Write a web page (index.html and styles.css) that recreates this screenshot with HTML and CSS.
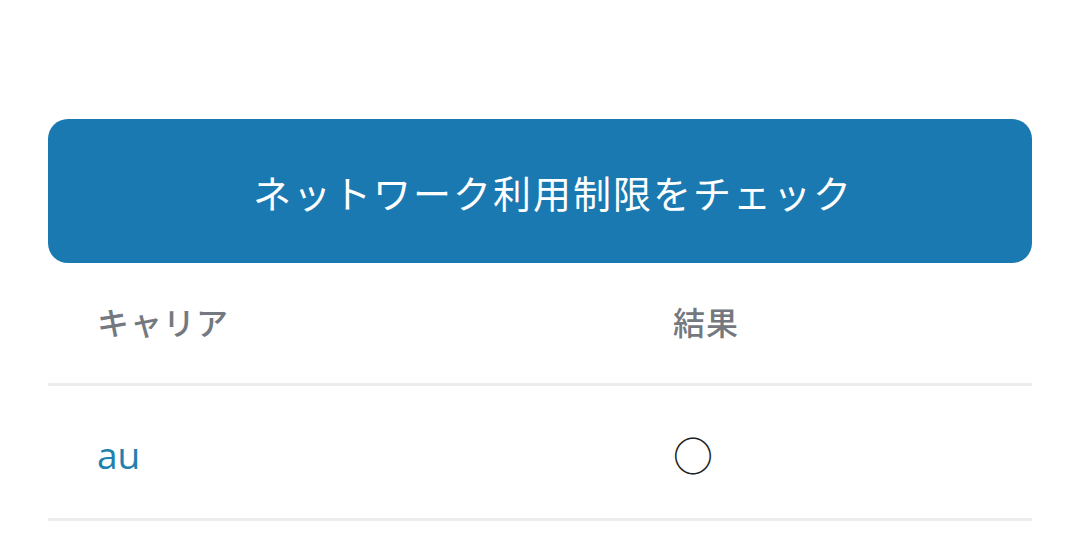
FILE: index.html
```html
<!DOCTYPE html>
<html lang="ja">
<head>
  <meta charset="UTF-8">
  <meta name="viewport" content="width=device-width, initial-scale=1.0">
  <title>ネットワーク利用制限チェック</title>
  <link rel="stylesheet" href="styles.css">
</head>
<body>
  <div class="page">
    <button type="button" class="check-button">ネットワーク利用制限をチェック</button>

    <div class="result-table">
      <div class="table-row table-head">
        <div class="cell">キャリア</div>
        <div class="cell">結果</div>
      </div>
      <div class="table-row table-body">
        <div class="cell carrier">au</div>
        <div class="cell mark">○</div>
      </div>
    </div>
  </div>
</body>
</html>
```

FILE: styles.css
```css
* {
  margin: 0;
  padding: 0;
  box-sizing: border-box;
  font-family: 'Noto Sans CJK JP', 'Noto Sans', sans-serif;
}

body {
  background-color: #fff;
}

.page {
  padding: 119px 48px 0;
}

.check-button {
  display: block;
  width: 100%;
  height: 144px;
  padding-left: 26px;
  background-color: #1a79b1;
  color: #fff;
  border: none;
  border-radius: 20px;
  font-size: 38px;
  letter-spacing: 2px;
  cursor: pointer;
}

.table-row {
  display: grid;
  grid-template-columns: 576px 1fr;
  align-items: center;
  border-bottom: 3px solid #ececec;
}

.table-row .cell {
  padding: 0 49px;
}

.table-head {
  height: 123px;
  padding-bottom: 4px;
  color: #74797f;
  font-size: 32px;
  font-weight: 500;
  letter-spacing: 1px;
}

.table-body {
  height: 135px;
  padding-top: 4px;
}

.carrier {
  color: #2180ad;
  font-family: 'Open Sans', 'Noto Sans', sans-serif;
  font-size: 37px;
}

.mark {
  color: #222;
  font-size: 40px;
}
```
